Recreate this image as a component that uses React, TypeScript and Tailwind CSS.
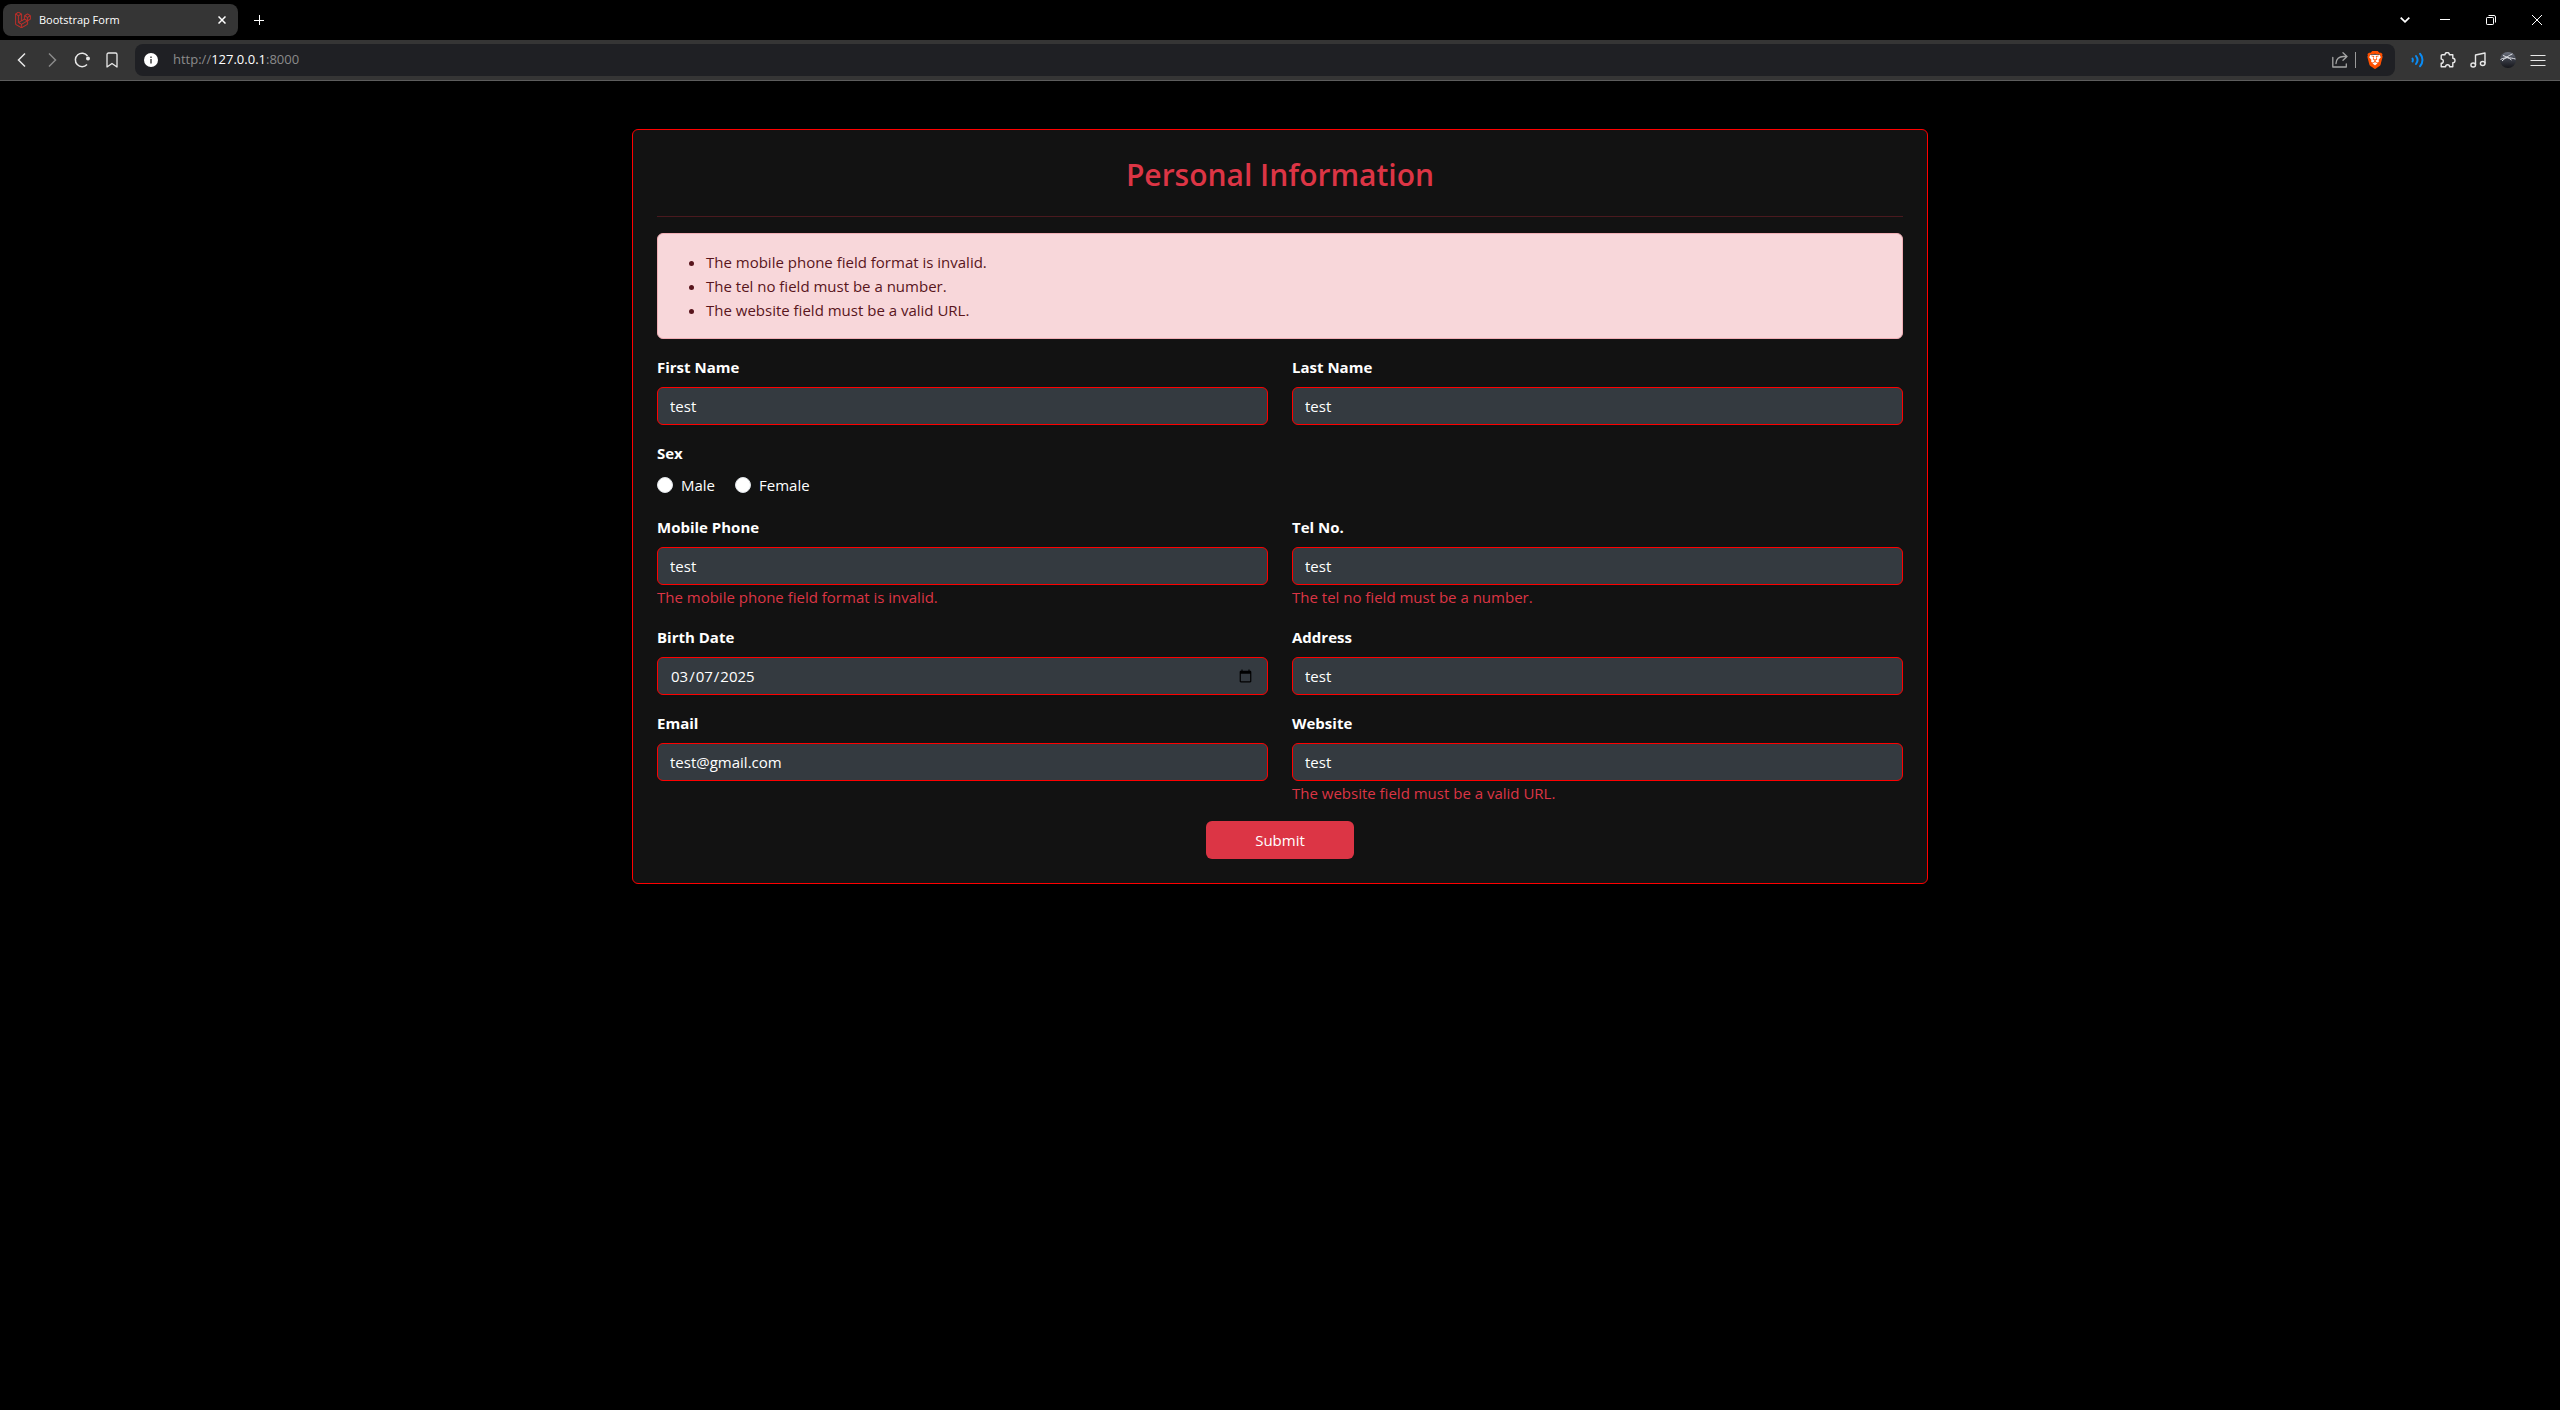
import { useState } from "react";
import type { ReactNode } from "react";
import { SiBrave, SiLaravel } from "react-icons/si";

type FieldProps = { id: string; label: string; type?: string; value: string; error?: string };

function Field({ id, label, type = "text", value, error }: FieldProps) {
  const [text, setText] = useState(value);
  return (
    <div>
      <label htmlFor={id} className="mb-2 block font-bold">{label}</label>
      <input
        id={id}
        name={id}
        type={type}
        value={text}
        onChange={(e) => setText(e.target.value)}
        className="block h-[38px] w-full rounded-md border border-[#f00] bg-[#343a40] px-3 py-1.5 text-white outline-none"
      />
      {error && <div className="text-[#dc3545]">{error}</div>}
    </div>
  );
}

function Radio({ id, label }: { id: string; label: string }) {
  return (
    <div className="flex items-center gap-2">
      <input
        id={id}
        type="radio"
        name="sex"
        className="size-4 appearance-none rounded-full border border-[#dee2e6] bg-white checked:border-4 checked:border-[#0d6efd]"
      />
      <label htmlFor={id}>{label}</label>
    </div>
  );
}

const ToolButton = ({ label, children }: { label: string; children: ReactNode }) => (
  <button type="button" aria-label={label} className="flex size-[30px] shrink-0 items-center justify-center text-[#e8e8e8]">
    {children}
  </button>
);

const WindowButton = ({ label, children }: { label: string; children: ReactNode }) => (
  <button type="button" aria-label={label} className="flex h-10 w-[46px] shrink-0 items-center justify-center text-white">
    {children}
  </button>
);

function TabBar() {
  return (
    <div className="flex h-10 items-center bg-black">
      <div className="ml-[3px] flex h-8 w-[235px] items-center rounded-lg bg-[#353535] pr-2 pl-3">
        <SiLaravel className="size-4 shrink-0 stroke-[#d9302a] stroke-[0.5] text-[#d9302a]" />
        <span className="ml-2 flex-1 text-[11px] text-white">Bootstrap Form</span>
        <button type="button" aria-label="Close tab" className="flex size-4 items-center justify-center text-white">
          <svg viewBox="0 0 8 8" className="size-2" fill="none" stroke="currentColor" strokeWidth="1.5">
            <path d="M.5.5l7 7M7.5.5l-7 7" />
          </svg>
        </button>
      </div>
      <button type="button" aria-label="New tab" className="ml-1.5 flex size-[30px] items-center justify-center text-white">
        <svg viewBox="0 0 10 10" className="size-2.5" fill="none" stroke="currentColor">
          <path d="M5.5 0v10M0 5.5h10" />
        </svg>
      </button>
      <div className="ml-auto flex">
        <button type="button" aria-label="Search tabs" className="flex h-10 w-[34px] items-center justify-center text-white">
          <svg viewBox="0 0 10 6" className="h-1.5 w-2.5" fill="none" stroke="currentColor" strokeWidth="1.8">
            <path d="M.7.7 5 4.8 9.3.7" />
          </svg>
        </button>
        <WindowButton label="Minimize">
          <svg viewBox="0 0 10 10" className="size-2.5" stroke="currentColor">
            <path d="M0 4.5h10" />
          </svg>
        </WindowButton>
        <WindowButton label="Restore">
          <svg viewBox="0 0 10 10" className="size-2.5" fill="none" stroke="currentColor">
            <rect x=".5" y="2.5" width="7" height="7" rx=".7" />
            <path d="M2.5.5H8A1.5 1.5 0 0 1 9.5 2v5.5" />
          </svg>
        </WindowButton>
        <WindowButton label="Close">
          <svg viewBox="0 0 10 10" className="size-2.5" fill="none" stroke="currentColor">
            <path d="M0 0l10 10M10 0 0 10" />
          </svg>
        </WindowButton>
      </div>
    </div>
  );
}

function ShareIcon() {
  return (
    <svg viewBox="0 0 16 16" className="size-4 text-[#a5a5a5]" fill="none" stroke="currentColor" strokeWidth="1.3" strokeLinejoin="round" strokeLinecap="round">
      <path d="M.8 5.5V15h13.5v-3" />
      <path d="M11 .8l4 3.7-4 3.7M15 4.5h-3.5C7 4.5 4.3 7.5 4 11.5" />
    </svg>
  );
}

function BraveIcon() {
  return (
    <svg viewBox="0 0 24 24" className="size-[18px]">
      <path d="M5 5h14l1 4-4 10-4 2-4-2L4 9z" fill="#fff" />
      <SiBrave size={24} color="#ff5000" />
    </svg>
  );
}

function SoundIcon() {
  return (
    <svg viewBox="0 0 16 16" className="size-4 text-[#0a8cf5]" fill="none" stroke="currentColor" strokeWidth="2" strokeLinecap="round">
      <path d="M2.5 6.5a3 3 0 0 1 0 3M6 4a6.5 6.5 0 0 1 0 8M10 1.8a9 9 0 0 1 0 12.4" />
    </svg>
  );
}

function PuzzleIcon() {
  return (
    <svg viewBox="0 0 16 16" className="size-4" fill="none" stroke="currentColor" strokeWidth="1.4" strokeLinejoin="round">
      <path d="M2.2 2.7H5a2.2 2.2 0 0 1 4.4 0h3.4v3.5a2.2 2.2 0 0 1 0 4.4V14.8H9.6a2 2 0 0 0-4 0H1.2v-3.5a2.100 2.100 0 0 0 0-4.200V3.700a1 1 0 0 1 1-1z" />
    </svg>
  );
}

function MusicIcon() {
  return (
    <svg viewBox="0 0 16 16" className="size-4" fill="none" stroke="currentColor" strokeWidth="1.4" strokeLinejoin="round">
      <path d="M5.500 13V3l9.500-2v10.500" />
      <ellipse cx="3.2" cy="13" rx="2.3" ry="2" />
      <ellipse cx="12.7" cy="11.5" rx="2.3" ry="2" />
    </svg>
  );
}

function AvatarIcon() {
  return (
    <svg viewBox="0 0 16 16" className="size-4">
      <defs>
        <linearGradient id="globe" x1="0" y1="0" x2="0" y2="1">
          <stop offset="0" stopColor="#6e7380" />
          <stop offset=".45" stopColor="#3a3d47" />
          <stop offset="1" stopColor="#15161b" />
        </linearGradient>
      </defs>
      <circle cx="8" cy="8" r="8" fill="url(#globe)" />
      <path d="M.5 7.5C5 5 10 5.5 15.5 7M3 3.5c3 1 6 2.5 8.5 4.500M12.500 1.800C9 3.500 5 6 2 9" fill="none" stroke="#e4e6ea" strokeWidth="1" />
    </svg>
  );
}

function AddressBar() {
  return (
    <div className="flex h-[41px] items-center border-b border-[#5d5d5d] bg-[#353535] px-[7px]">
      <ToolButton label="Back">
        <svg viewBox="0 0 16 16" className="size-4" fill="none" stroke="currentColor" strokeWidth="1.5">
          <path d="M11 1.5 4.5 8l6.5 6.5" />
        </svg>
      </ToolButton>
      <button type="button" aria-label="Forward" disabled className="flex size-[30px] items-center justify-center text-[#8a8a8a]">
        <svg viewBox="0 0 16 16" className="size-4" fill="none" stroke="currentColor" strokeWidth="1.5">
          <path d="M5 1.5 11.5 8 5 14.5" />
        </svg>
      </button>
      <ToolButton label="Reload">
        <svg viewBox="0 0 16 16" className="size-4" fill="none" stroke="currentColor" strokeWidth="1.5">
          <path d="M13 12.500a6.700 6.700 0 1 1 .5-8.500" />
          <circle cx="14" cy="6.5" r="2" fill="currentColor" stroke="none" />
        </svg>
      </ToolButton>
      <ToolButton label="Bookmark">
        <svg viewBox="0 0 16 16" className="size-4" fill="none" stroke="currentColor" strokeWidth="1.3" strokeLinejoin="round">
          <path d="M4.500 1h7A1.500 1.500 0 0 1 13 2.500V15l-5-3.500L3 15V2.500A1.500 1.500 0 0 1 4.500 1z" />
        </svg>
      </ToolButton>
      <div className="mx-2 flex h-8 flex-1 items-center rounded-lg bg-[#1f2024] pr-[5px] pl-[9px]">
        <button type="button" aria-label="Site information" className="flex size-3.5 items-center justify-center">
          <svg viewBox="0 0 14 14" className="size-3.5">
            <circle cx="7" cy="7" r="7" fill="#fff" />
            <path d="M6.300 3.500h1.400v1.400H6.300zM6.300 6h1.400v4.500H6.300z" fill="#333" />
          </svg>
        </button>
        <div className="ml-[15px] flex-1 text-[13px] text-[#8b8b8b]">
          http://<span className="text-white">127.0.0.1</span>:8000
        </div>
        <ToolButton label="Share this page"><ShareIcon /></ToolButton>
        <div className="mr-1 h-4 w-px bg-[#9a9a9a]" />
        <ToolButton label="Brave Shields"><BraveIcon /></ToolButton>
      </div>
      <ToolButton label="Sound"><SoundIcon /></ToolButton>
      <ToolButton label="Extensions"><PuzzleIcon /></ToolButton>
      <ToolButton label="Media"><MusicIcon /></ToolButton>
      <ToolButton label="Profile"><AvatarIcon /></ToolButton>
      <ToolButton label="Menu">
        <svg viewBox="0 0 16 16" className="size-4" stroke="currentColor" strokeWidth="1">
          <path d="M.5 3.500h15M.5 8.500h15M.5 13.500h15" />
        </svg>
      </ToolButton>
    </div>
  );
}

export default function App() {
  return (
    <div className="min-h-screen bg-black font-['Open_Sans',sans-serif]">
      <TabBar />
      <AddressBar />
      <main className="mx-auto mt-12 max-w-[1320px] px-3 text-[15px] leading-6 text-white">
        <form className="rounded-md border border-[#f00] bg-[#121212] p-6" onSubmit={(e) => e.preventDefault()}>
          <h2 className="text-center text-3xl leading-[42px] font-semibold text-[#dc3545]">Personal Information</h2>
          <hr className="mt-5 mb-4 border-[#4a191e]" />
          <ul className="mb-4 list-disc rounded-md border border-[#f1aeb5] bg-[#f8d7da] py-4 pr-4 pl-12 text-[#58151c]">
            <li>The mobile phone field format is invalid.</li>
            <li>The tel no field must be a number.</li>
            <li>The website field must be a valid URL.</li>
          </ul>
          <div className="grid grid-cols-2 gap-x-6 gap-y-4">
            <Field id="first_name" label="First Name" value="test" />
            <Field id="last_name" label="Last Name" value="test" />
            <fieldset className="col-span-2 pb-0.5">
              <legend className="mb-2 font-bold">Sex</legend>
              <div className="flex gap-5">
                <Radio id="male" label="Male" />
                <Radio id="female" label="Female" />
              </div>
            </fieldset>
            <Field id="mobile_phone" label="Mobile Phone" value="test" error="The mobile phone field format is invalid." />
            <Field id="tel_no" label="Tel No." value="test" error="The tel no field must be a number." />
            <Field id="birth_date" label="Birth Date" type="date" value="2025-03-07" />
            <Field id="address" label="Address" value="test" />
            <Field id="email" label="Email" type="email" value="test@gmail.com" />
            <Field id="website" label="Website" value="test" error="The website field must be a valid URL." />
          </div>
          <div className="mt-4 flex justify-center">
            <button type="submit" className="h-[38px] rounded-md bg-[#dc3545] px-[49px]">Submit</button>
          </div>
        </form>
      </main>
    </div>
  );
}
